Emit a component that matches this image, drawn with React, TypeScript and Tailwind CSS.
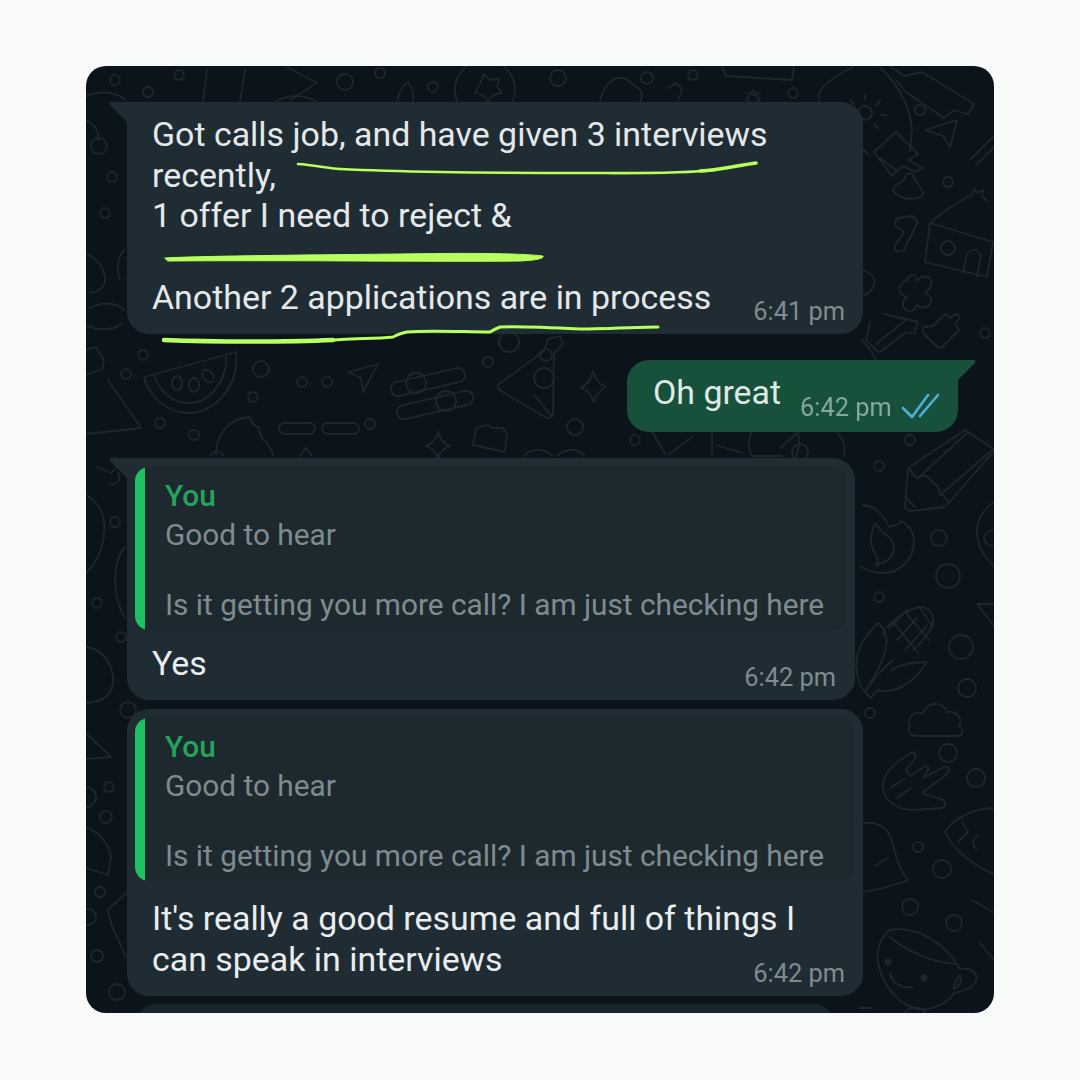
const ROBOTO = "font-['Roboto',sans-serif]";

function Doodles() {
  return (
    <svg
      className="absolute inset-0 h-full w-full blur-[0.4px]"
      viewBox="86 66 908 947"
      fill="none"
      stroke="#1e272c"
      strokeWidth="1.8"
      strokeLinejoin="round"
      strokeLinecap="round"
    >
      {/* top band */}
      <circle cx="115" cy="80" r="5" />
      <circle cx="148" cy="92" r="5" />
      <circle cx="179" cy="75" r="5" />
      <path d="M207 70l-4 32M245 70l-5 32M287 67l30 16-27 17M275 102c12-8 30-8 42 0" />
      <circle cx="345" cy="82" r="8" />
      <circle cx="380" cy="73" r="5" />
      <path d="M397 102c2-10 6-17 11-20 4 5 6 12 5 20" />
      <circle cx="433" cy="87" r="5" />
      <circle cx="485" cy="90" r="30" />
      <path d="M484 74l6 6 9-1-2 8 5 6-9 2-5 7-5-7-8-2 4-7z" />
      <circle cx="558" cy="78" r="8" />
      <path d="M600 102c2-14 12-26 22-24 8 0 10 8 16 10 6 4 4 10 2 14" />
      <circle cx="647" cy="78" r="6" />
      <circle cx="693" cy="75" r="5" />
      <path d="M668 88l8-5 6 6-4 12M722 67l4 9 66 4 2-14M746 100l7-10 7 10-7 4zM745 93l8 2 7-2" />
      <circle cx="793" cy="93" r="5" />
      {/* top right */}
      <path d="M853 67c-16 8-30 18-34 26-2 8 4 18 10 26l40 36M880 67c18 18 30 38 32 62l-2 22" />
      <circle cx="865" cy="113" r="7" />
      <path d="M865 95v5M880 101l-4 4M886 115h-5M850 100l4 4M878 128l-4-4" />
      <path d="M874 152l22-20 22 22-10 6 14 8-6 4-14-6-10 10zM880 158l18 14" />
      <path d="M890 66l14 10 18-4 52 32-6 10-14-4-10 8-38-26-10-12" />
      <circle cx="920" cy="110" r="5" />
      <path d="M925 130l32-10-7 27-7-11z" />
      <path d="M970 160l24-24M976 165l18-18" />
      <circle cx="948" cy="182" r="5" />
      <path d="M893 190c2-8 10-6 12-12 2-6 8-6 8-2 2 6 10 12 10 18-2 6-24 8-30-4z" />
      <path d="M898 218l14-2 6 6-14 28-6 2c-4-2-4-6-2-8l8-12-8-6c-2-3 0-6 2-8z" />
      <path d="M930 223c12-10 28-22 42-28l2-6 4 4 5-3-1 6 5 5M930 223l63 19M930 223l-5 39 62 15 6-35" />
      <path d="M963 273l3-15c1-6 6-9 10-8 4 1 5 5 4 9l-3 18" />
      <circle cx="948" cy="248" r="7" />
      <path d="M909 277c4-4 8-2 8 4 4-6 12-6 14 0 2 4-2 8-6 12 6 2 8 8 4 12-4 4-8 4-12 0-2 6-8 8-12 4-4-4-2-10 2-12-6-2-10-6-6-12 2-4 6-4 8-8z" />
      <path d="M933 326l12-12 5 4 5-4c3 0 5 3 4 5l-4 5 4 6-17 17c-3 1-5 0-6-1l-12-12c-2-3-2-5 0-7z" />
      <circle cx="985" cy="333" r="5" />
      <path d="M864 271c8 2 12 8 10 14-2 6-6 10-12 10" />
      <path d="M884 314l34 8-4 12-8-2-26 20M876 344l30-24M870 322l-4 18 12 12" />
      <path d="M862 340c6 6 10 12 14 20" />
      {/* left edge */}
      <circle cx="99" cy="146" r="8" />
      <circle cx="112" cy="177" r="5" />
      <circle cx="105" cy="213" r="5" />
      <path d="M86 253c12 6 19 16 19 27 0 6-6 12-15 13M90 308c10-6 26-6 34 2M86 325c12 6 28 6 36-2" />
      <path d="M126 100c-10-8-24-10-40-4M86 120c8 4 14 12 12 20M124 250c-6 6-8 18-4 30" />
      {/* row behind the outgoing bubble */}
      <path d="M144 377l92-25c4 33-21 61-47 61-19 0-39-13-45-36z" />
      <path d="M154 375c6 17 18 28 35 28 21 0 39-23 37-48" />
      <ellipse cx="177" cy="383" rx="5" ry="7" />
      <ellipse cx="194" cy="385" rx="5" ry="7" />
      <ellipse cx="208" cy="376" rx="5" ry="7" transform="rotate(-40 208 376)" />
      <circle cx="261" cy="369" r="8" />
      <circle cx="143" cy="355" r="5" />
      <circle cx="126" cy="374" r="5" />
      <circle cx="253" cy="397" r="5" />
      <circle cx="302" cy="382" r="5" />
      <circle cx="327" cy="382" r="5" />
      <path d="M348 372l30-8-15 28-2-14z" />
      <rect x="390" y="375" width="76" height="14" rx="7" transform="rotate(-13 428 382)" />
      <circle cx="416" cy="383" r="10" />
      <rect x="396" y="398" width="78" height="14" rx="7" transform="rotate(-13 435 405)" />
      <circle cx="446" cy="401" r="10" />
      <circle cx="488" cy="362" r="5" />
      <path d="M498 385l46-34 4-12 12-3 3 8-9 10-1 60c-1 4-4 5-8 3l-44-26c-3-2-4-4-3-6z" />
      <circle cx="544" cy="378" r="10" />
      <circle cx="546" cy="355" r="6" />
      <path d="M535 396l17 20M593 371c2 9 6 13 13 16-6 3-10 7-12 15-2-8-6-12-13-14 6-3 10-8 12-17z" />
      <circle cx="575" cy="427" r="8" />
      <circle cx="509" cy="342" r="10" />
      <path d="M86 350l10-3 8 14-2 8-16 6M108 380l33 48-55 6" />
      <circle cx="160" cy="423" r="5" />
      <circle cx="194" cy="435" r="5" />
      <path d="M216 455c0-22 14-36 33-38 3 6 6 10 10 10 0 8 4 14 8 16 3 4 5 8 6 12" />
      <rect x="279" y="418" width="36" height="11" rx="5.5" transform="translate(0 5)" />
      <rect x="322" y="418" width="37" height="11" rx="5.5" transform="translate(0 5)" />
      <circle cx="370" cy="424" r="5" />
      <path d="M438 432c2 8 6 12 12 14-6 2-10 6-12 12-2-6-6-10-12-12 6-2 10-6 12-14z" />
      <path d="M476 428l12-3 4 3 11 0 4 6-2 18-32-7z" />
      <path d="M524 456c6-8 22-8 28 0M558 456c6-8 22-8 26 0M300 456l6-8 6 8M210 456c4-6 10-6 14 0" />
      <circle cx="635" cy="440" r="5" />
      <path d="M650 428l15 26M668 455l24-18M712 425v30M716 445l26 8M752 430c-4 10-4 20 0 26h30M780 448l16-14M796 456c4-8 4-20 0-28M830 428c12 6 16 16 14 28" />
      <circle cx="800" cy="452" r="8" />
      {/* right column */}
      <path d="M905 508l3-40 57-38 30 20-50 57-35 4z" />
      <path d="M908 468c5 4 6 10 10 10 6-6 12 0 16 6 4 0 6 6 6 10 4 0 6 4 8 8M918 478l49-45M940 495l52-45M905 497l10 10" />
      <circle cx="910" cy="440" r="5" />
      <circle cx="879" cy="466" r="5" />
      <path d="M863 505c14 2 22 12 26 22 6-2 10-2 12-6 8 4 13 12 13 20 0 18-14 32-31 32-8 0-16-2-22-6" />
      <path d="M875 523c-4 10-6 20-1 28 2 6 6 8 2 14 10-2 18-8 18-18 0-10-10-10-19-24z" />
      <circle cx="939" cy="538" r="8" />
      <circle cx="948" cy="576" r="12" />
      <circle cx="879" cy="597" r="5" />
      <circle cx="961" cy="647" r="12" />
      <circle cx="967" cy="688" r="9" />
      <circle cx="870" cy="713" r="5" />
      <path d="M994 502c-12 8-17 18-17 30 0 12 6 24 17 34M994 530c-6 0-10 4-10 8s4 8 10 8" />
      <path d="M994 604h-17l17 22" />
      <path d="M887 627c10-10 22-18 32-20 6 0 12 2 14 10 1 10-8 22-20 33" />
      <path d="M893 622l26 32M905 612l24 28M919 607l14 20M885 632l-2 4M897 640l20-22M905 650l22-24M889 628l18-18" />
      <path d="M865 692c-8-10-10-24-8-35 2-12 12-26 21-34 8 6 10 16 8 24-2 14-12 30-21 45zM865 692c6-10 18-24 28-32M865 692l6 6 6-8c18 4 34-4 50-28-14 0-26 2-36 8" />
      <path d="M910 726c-4-10 6-16 13-12 2-12 20-14 24-2 10-2 16 8 12 14 6 4 4 10-2 10h-40c-6 0-10-4-7-10z" />
      <circle cx="948" cy="753" r="9" />
      <circle cx="976" cy="778" r="9" />
      <path d="M913 752c3 2 3 5 1 8l-8 10 4 6 14-9c3-2 5 0 4 3l-5 8 21-11c6-2 7 4 2 8l-24 18 12 4c12 2 14 8 8 11l-30 2c-16-1-30-10-29-26 1-12 12-22 30-32z" />
      <path d="M891 787l14-8M897 798l14-10" />
      <path d="M863 823c16-2 26 6 30 22 3 14 8 26 15 35-10 4-30 10-45 12" />
      <path d="M876 866c4-4 8-6 12-8" />
      <path d="M994 808c-20 0-40 10-49 24 6 14 24 32 49 42M962 822l6 10-10 10M978 835c-6 4-6 10-2 14M972 900l21 12" />
      <circle cx="918" cy="847" r="5" />
      <circle cx="942" cy="869" r="9" />
      <circle cx="910" cy="907" r="8" />
      <circle cx="954" cy="923" r="8" />
      <path d="M890 930c-10 8-14 20-12 32 4 24 22 44 40 47 16 2 32-8 36-16 10-2 20-6 22-12 2-8-4-14-16-12-14-26-44-44-70-39z" />
      <path d="M890 937c16 14 44 26 66 27" />
      <circle cx="888" cy="962" r="2.5" fill="#1e272c" />
      <circle cx="924" cy="978" r="2.5" fill="#1e272c" />
      <path d="M890 973c2 10 12 16 22 14" />
      <path d="M960 975c-4 4-6 8-6 14 6-2 8-8 6-14z" />
      <path d="M980 943l14 17M860 1008h12M905 1012c6-6 14-6 20 0" />
      {/* left column, lower */}
      <path d="M115 457l2 10-6 6-14-6M118 472c4 8-2 14-8 12" />
      <circle cx="115" cy="522" r="5" />
      <path d="M86 495c14 8 20 22 18 38-1 16-8 30-18 40" />
      <path d="M125 547c-12 12-14 50 0 70" />
      <circle cx="97" cy="603" r="5" />
      <circle cx="121" cy="637" r="5" />
      <path d="M87 647c14 2 26 16 26 33s-12 22-26 23" />
      <circle cx="128" cy="710" r="8" />
      <path d="M86 733l25 24-25 2" />
      <circle cx="109" cy="787" r="5" />
      <circle cx="106" cy="817" r="6" />
      <circle cx="86" cy="797" r="10" />
      <path d="M86 827c14 6 24 18 25 30l-3 18-22-7" />
      <circle cx="100" cy="892" r="5" />
      <circle cx="88" cy="917" r="8" />
      <path d="M126 893l-18 17 4 16 14 31" />
      <circle cx="97" cy="956" r="6" />
      <circle cx="117" cy="992" r="8" />
    </svg>
  );
}

function Tail({ side, color }: { side: "left" | "right"; color: string }) {
  return (
    <svg
      className={side === "left" ? "absolute left-[-18px] top-0" : "absolute right-[-18px] top-0"}
      width="22"
      height="24"
      viewBox="0 0 22 24"
    >
      <path
        d={side === "left" ? "M22 0H3C0 0 0 2 2 4L22 24Z" : "M0 0H19C22 0 22 2 20 4L0 24Z"}
        fill={color}
      />
    </svg>
  );
}

function Quote() {
  return (
    <div className="flex h-[163px] rounded-[14px] bg-[#1e292f] overflow-hidden">
      <div className="w-[10px] shrink-0 rounded-l-[10px] bg-[#1fc05f]" />
      <div className="flex flex-col pl-[20px] pt-[8px]">
        <div className="text-[29.8px] font-medium leading-[41px] text-[#23a45c]">You</div>
        <div className="text-[29.8px] leading-[37px] text-[#7f8b90]">Good to hear</div>
        <div className="mt-[34px] text-[29.8px] leading-[35px] text-[#7f8b90] whitespace-nowrap">
          Is it getting you more call? I am just checking here
        </div>
      </div>
    </div>
  );
}

function Time({ children, className = "" }: { children: string; className?: string }) {
  return <span className={`text-[25.4px] leading-none whitespace-nowrap ${className}`}>{children}</span>;
}

const FIRST_LINES = [
  "Got calls job, and have given 3 interviews",
  "recently,",
  "1 offer I need to reject &",
  "\u00a0",
  "Another 2 applications are in process",
];

export default function App() {
  return (
    <div className={`flex h-[1080px] w-[1080px] justify-center bg-[#f8faf8] pt-[66px] ${ROBOTO}`}>
      <div className="relative h-[947px] w-[908px] overflow-hidden rounded-[20px] bg-[#0a141a]">
        <Doodles />
        <div className="relative flex flex-col items-start pl-[41px] pt-[36px] blur-[0.5px]">
          {/* incoming */}
          <div className="relative h-[232px] w-[736px] rounded-b-[22px] rounded-tr-[22px] bg-[#202c33] pl-[25px] pt-[13px]">
            <Tail side="left" color="#202c33" />
            <div className="text-[33.9px] leading-[40.7px] text-[#e4e8ea]">
              {FIRST_LINES.map((line, i) => (
                <div key={i} className="w-fit whitespace-nowrap">
                  {line}
                </div>
              ))}
            </div>
            <Time className="absolute right-[18px] bottom-[10px] text-[#7f8b90]">6:41 pm</Time>
          </div>

          {/* outgoing */}
          <div className="relative ml-[500px] mt-[26px] flex h-[72px] w-[331px] items-start rounded-b-[22px] rounded-tl-[22px] bg-[#17513c] pl-[26px] pt-[13px]">
            <Tail side="right" color="#17513c" />
            <span className="text-[33.9px] leading-[40px] text-[#dfe9e5]">Oh great</span>
            <Time className="absolute left-[173px] top-[35px] text-[#84a99a]">6:42 pm</Time>
            <svg className="absolute left-[274px] top-[31px]" width="40" height="28" viewBox="0 0 40 28" fill="none" stroke="#4fb0d6" strokeWidth="2.6" strokeLinecap="round" strokeLinejoin="round">
              <path d="M2 17l9 9L27 4" />
              <path d="M19 25L37 4" />
            </svg>
          </div>

          {/* reply */}
          <div className="relative mt-[26px] h-[242px] w-[728px] rounded-b-[22px] rounded-tr-[22px] bg-[#202c33] pl-[8px] pr-[9px] pt-[9px]">
            <Tail side="left" color="#202c33" />
            <Quote />
            <div className="pl-[17px] pt-[14px] text-[33.9px] leading-[40px] text-[#e9edef]">Yes</div>
            <Time className="absolute right-[19px] bottom-[10px] text-[#7f8b90]">6:42 pm</Time>
          </div>

          {/* reply 2 */}
          <div className="relative mt-[9px] h-[287px] w-[736px] rounded-[22px] bg-[#202c33] pl-[8px] pr-[9px] pt-[9px]">
            <Quote />
            <div className="pl-[17px] pt-[17px] text-[33.9px] leading-[41px] text-[#e9edef]">
              <div className="w-fit whitespace-nowrap">It's really a good resume and full of things I</div>
              <div className="w-fit whitespace-nowrap">can speak in interviews</div>
            </div>
            <Time className="absolute right-[18px] bottom-[10px] text-[#7f8b90]">6:42 pm</Time>
          </div>

          {/* next bubble edge, cut off by the card */}
          <div className="ml-[8px] mt-[8px] h-[30px] w-[700px] rounded-t-[22px] bg-[#1a252b]" />
        </div>

        {/* highlighter strokes */}
        <svg className="absolute inset-0 h-full w-full" viewBox="86 66 908 947" fill="none" stroke="#b9ff5e" strokeLinecap="round" strokeLinejoin="round">
          <path d="M298 164c16 1 28 4 42 5 60 3 170 4 240 4 50 0 100 1 135-3" strokeWidth="2.6" />
          <path d="M700 171c20-1 40-6 56-8" strokeWidth="3.6" />
          <path
            d="M165 258c35-2 135-3 235-4 60-1 120-1 143 2 1 2-3 4-23 5-70 1-220-1-352 0z"
            fill="#b9ff5e"
            strokeWidth="1"
          />
          <path d="M333 340c25-2 40-1 60-3 8-4 14-5 14-5 20-2 60 0 83 0 5-3 10-5 10-5 20-1 60 1 80 2 30 0 60-2 78-2" strokeWidth="3" />
          <path d="M164 340c50 2 125 2 169 0" strokeWidth="4.4" />
        </svg>
      </div>
    </div>
  );
}
